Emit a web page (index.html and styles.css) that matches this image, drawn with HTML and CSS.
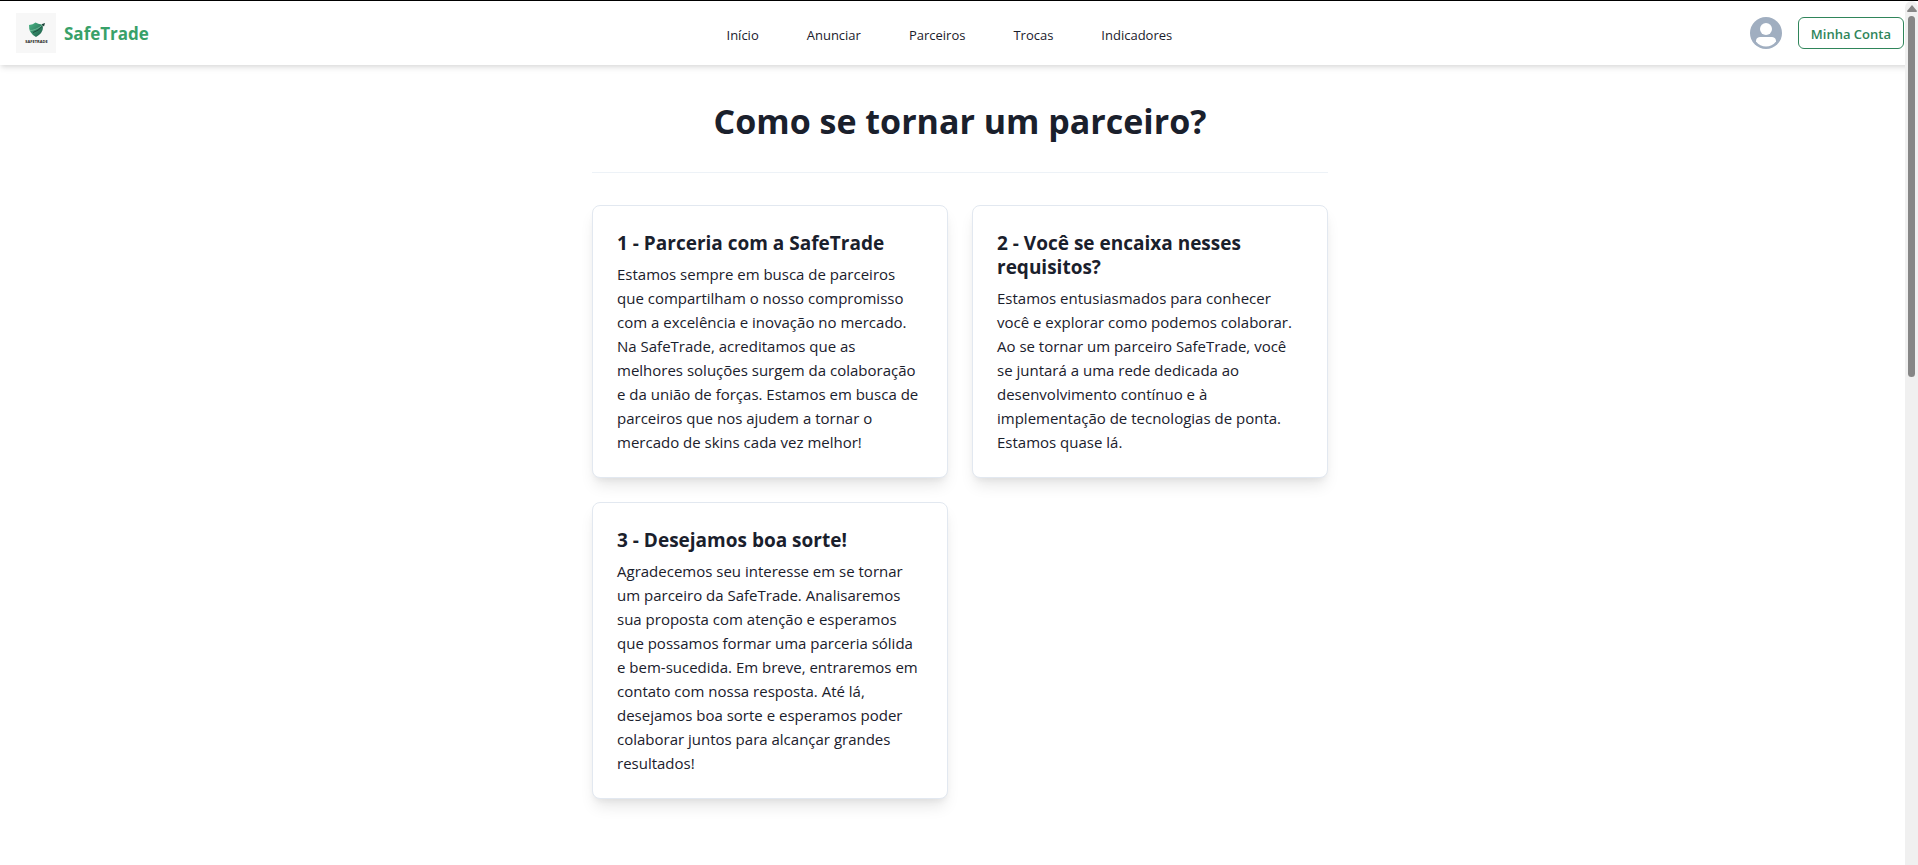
FILE: index.html
```html
<!DOCTYPE html>
<html lang="pt-BR">
<head>
<meta charset="utf-8">
<title>SafeTrade - Parceiros</title>
<link rel="stylesheet" href="styles.css">
</head>
<body>
<header class="header">
  <a class="brand" href="#">
    <svg class="brand-logo" viewBox="0 0 40 40" aria-hidden="true">
      <defs>
        <linearGradient id="shield" x1="0" y1="0" x2="1" y2="1">
          <stop offset="0" stop-color="#4bb888"/>
          <stop offset="1" stop-color="#1d5a47"/>
        </linearGradient>
      </defs>
      <rect width="40" height="40" fill="#f7f7f7"/>
      <path d="M13 12Q17 11.500 19.500 9.500Q22 11 25.500 11.500L27 14.500Q27 20 20 24Q12.500 20 13 12Z" fill="url(#shield)"/>
      <path d="M13.500 17.500Q19 18 27.500 11.500" fill="none" stroke="#8fd0b0" stroke-width=".6"/>
      <path d="M17 19.500Q22 18.500 27.500 12" fill="none" stroke="#173f34" stroke-width=".8"/>
      <path d="M25.500 11.200L29 10L28 13.600Z" fill="#173f34"/>
      <text class="brand-logo-text" x="20.500" y="30" text-anchor="middle">SAFETRADE</text>
    </svg>
    <span class="brand-name">SafeTrade</span>
  </a>
  <nav class="nav">
    <a href="#">Início</a>
    <a href="#">Anunciar</a>
    <a href="#">Parceiros</a>
    <a href="#">Trocas</a>
    <a href="#">Indicadores</a>
  </nav>
  <div class="account">
    <svg class="avatar" viewBox="0 0 32 32" role="img" aria-label="Avatar">
      <circle cx="16" cy="16" r="16" fill="#a0aec0"/>
      <circle cx="16" cy="12" r="6" fill="#fff"/>
      <path d="M6 24.500C6 21 8 20 11 20H21C24 20 26 21 26 24.500C23.500 27.800 20 29.500 16 29.500S8.500 27.800 6 24.500Z" fill="#fff"/>
    </svg>
    <button class="account-button" type="button">Minha Conta</button>
  </div>
</header>
<main class="content">
  <h1 class="title">Como se tornar um parceiro?</h1>
  <hr class="divider">
  <div class="cards">
    <section class="card">
      <h2 class="card-title">1 - Parceria com a SafeTrade</h2>
      <p class="card-text">Estamos sempre em busca de parceiros que compartilham o nosso compromisso com a excelência e inovação no mercado. Na SafeTrade, acreditamos que as melhores soluções surgem da colaboração e da união de forças. Estamos em busca de parceiros que nos ajudem a tornar o mercado de skins cada vez melhor!</p>
    </section>
    <section class="card">
      <h2 class="card-title">2 - Você se encaixa nesses requisitos?</h2>
      <p class="card-text">Estamos entusiasmados para conhecer você e explorar como podemos colaborar. Ao se tornar um parceiro SafeTrade, você se juntará a uma rede dedicada ao desenvolvimento contínuo e à implementação de tecnologias de ponta. Estamos quase lá.</p>
    </section>
    <section class="card">
      <h2 class="card-title">3 - Desejamos boa sorte!</h2>
      <p class="card-text">Agradecemos seu interesse em se tornar um parceiro da SafeTrade. Analisaremos sua proposta com atenção e esperamos que possamos formar uma parceria sólida e bem-sucedida. Em breve, entraremos em contato com nossa resposta. Até lá, desejamos boa sorte e esperamos poder colaborar juntos para alcançar grandes resultados!</p>
    </section>
  </div>
</main>
<div class="scrollbar" aria-hidden="true">
  <svg class="scrollbar-arrow" viewBox="0 0 10 7"><path d="M5 0L10 6Q10 7 9 7H1Q0 7 0 6Z" fill="#868686"/></svg>
  <div class="scrollbar-thumb"></div>
</div>
</body>
</html>
```
FILE: styles.css
```css
* {
  box-sizing: border-box;
}

body {
  margin: 0;
  background: #fff;
  color: #1a202c;
  font-family: "Segoe UI", "Open Sans", "Noto Sans", sans-serif;
  font-size: 15px;
  line-height: 24px;
}

a {
  color: inherit;
  text-decoration: none;
}

.header {
  display: flex;
  align-items: center;
  justify-content: space-between;
  height: 65px;
  padding: 0 14px 0 16px;
  border-top: 1px solid #000;
  background: #fff;
  box-shadow: 0 4px 6px -1px rgba(0, 0, 0, 0.1), 0 2px 4px -1px rgba(0, 0, 0, 0.06);
}

.brand,
.account {
  display: flex;
  align-items: center;
}

.brand {
  gap: 8px;
}

.brand-logo {
  width: 40px;
  height: 40px;
}

.brand-logo-text {
  font-size: 4px;
  font-weight: 700;
  fill: #222;
}

.brand-name {
  padding-top: 2px;
  color: #38a169;
  font-size: 17px;
  font-weight: 700;
}

.nav {
  display: flex;
  gap: 48px;
  padding-top: 4px;
  font-size: 13px;
}

.account {
  gap: 16px;
}

.avatar {
  width: 32px;
  height: 32px;
}

.account-button {
  height: 32px;
  padding: 1px 12px 0;
  border: 1px solid #2f855a;
  border-radius: 6px;
  background: transparent;
  color: #2f855a;
  font: inherit;
  font-size: 13px;
  font-weight: 600;
}

.content {
  max-width: 768px;
  margin: 0 auto;
  padding: 32px 15px 32px 17px;
}

.title {
  margin: 0 0 26px;
  font-size: 34px;
  line-height: 49px;
  font-weight: 700;
  text-align: center;
}

.divider {
  margin: 0 0 32px;
  border: 0;
  border-top: 1px solid #edf2f7;
}

.cards {
  display: grid;
  grid-template-columns: repeat(2, 1fr);
  gap: 24px;
}

.card {
  padding: 25px 24px 23px;
  border: 1px solid #e2e8f0;
  border-radius: 8px;
  background: #fff;
  box-shadow: 0 10px 15px -3px rgba(0, 0, 0, 0.1), 0 4px 6px -2px rgba(0, 0, 0, 0.05);
}

.card-title {
  margin: 0 0 7px;
  font-size: 19px;
  line-height: 24px;
  font-weight: 700;
}

.card-text {
  margin: 0;
}

.scrollbar {
  position: fixed;
  top: 1px;
  right: 0;
  bottom: 0;
  display: flex;
  flex-direction: column;
  align-items: center;
  gap: 4px;
  width: 13px;
  padding-top: 4px;
  border-radius: 8px 8px 0 0;
  background: #f0f0f0;
}

.scrollbar-arrow {
  width: 10px;
  height: 7px;
}

.scrollbar-thumb {
  width: 7px;
  height: 42%;
  border-radius: 4px;
  background: #868686;
}
```
